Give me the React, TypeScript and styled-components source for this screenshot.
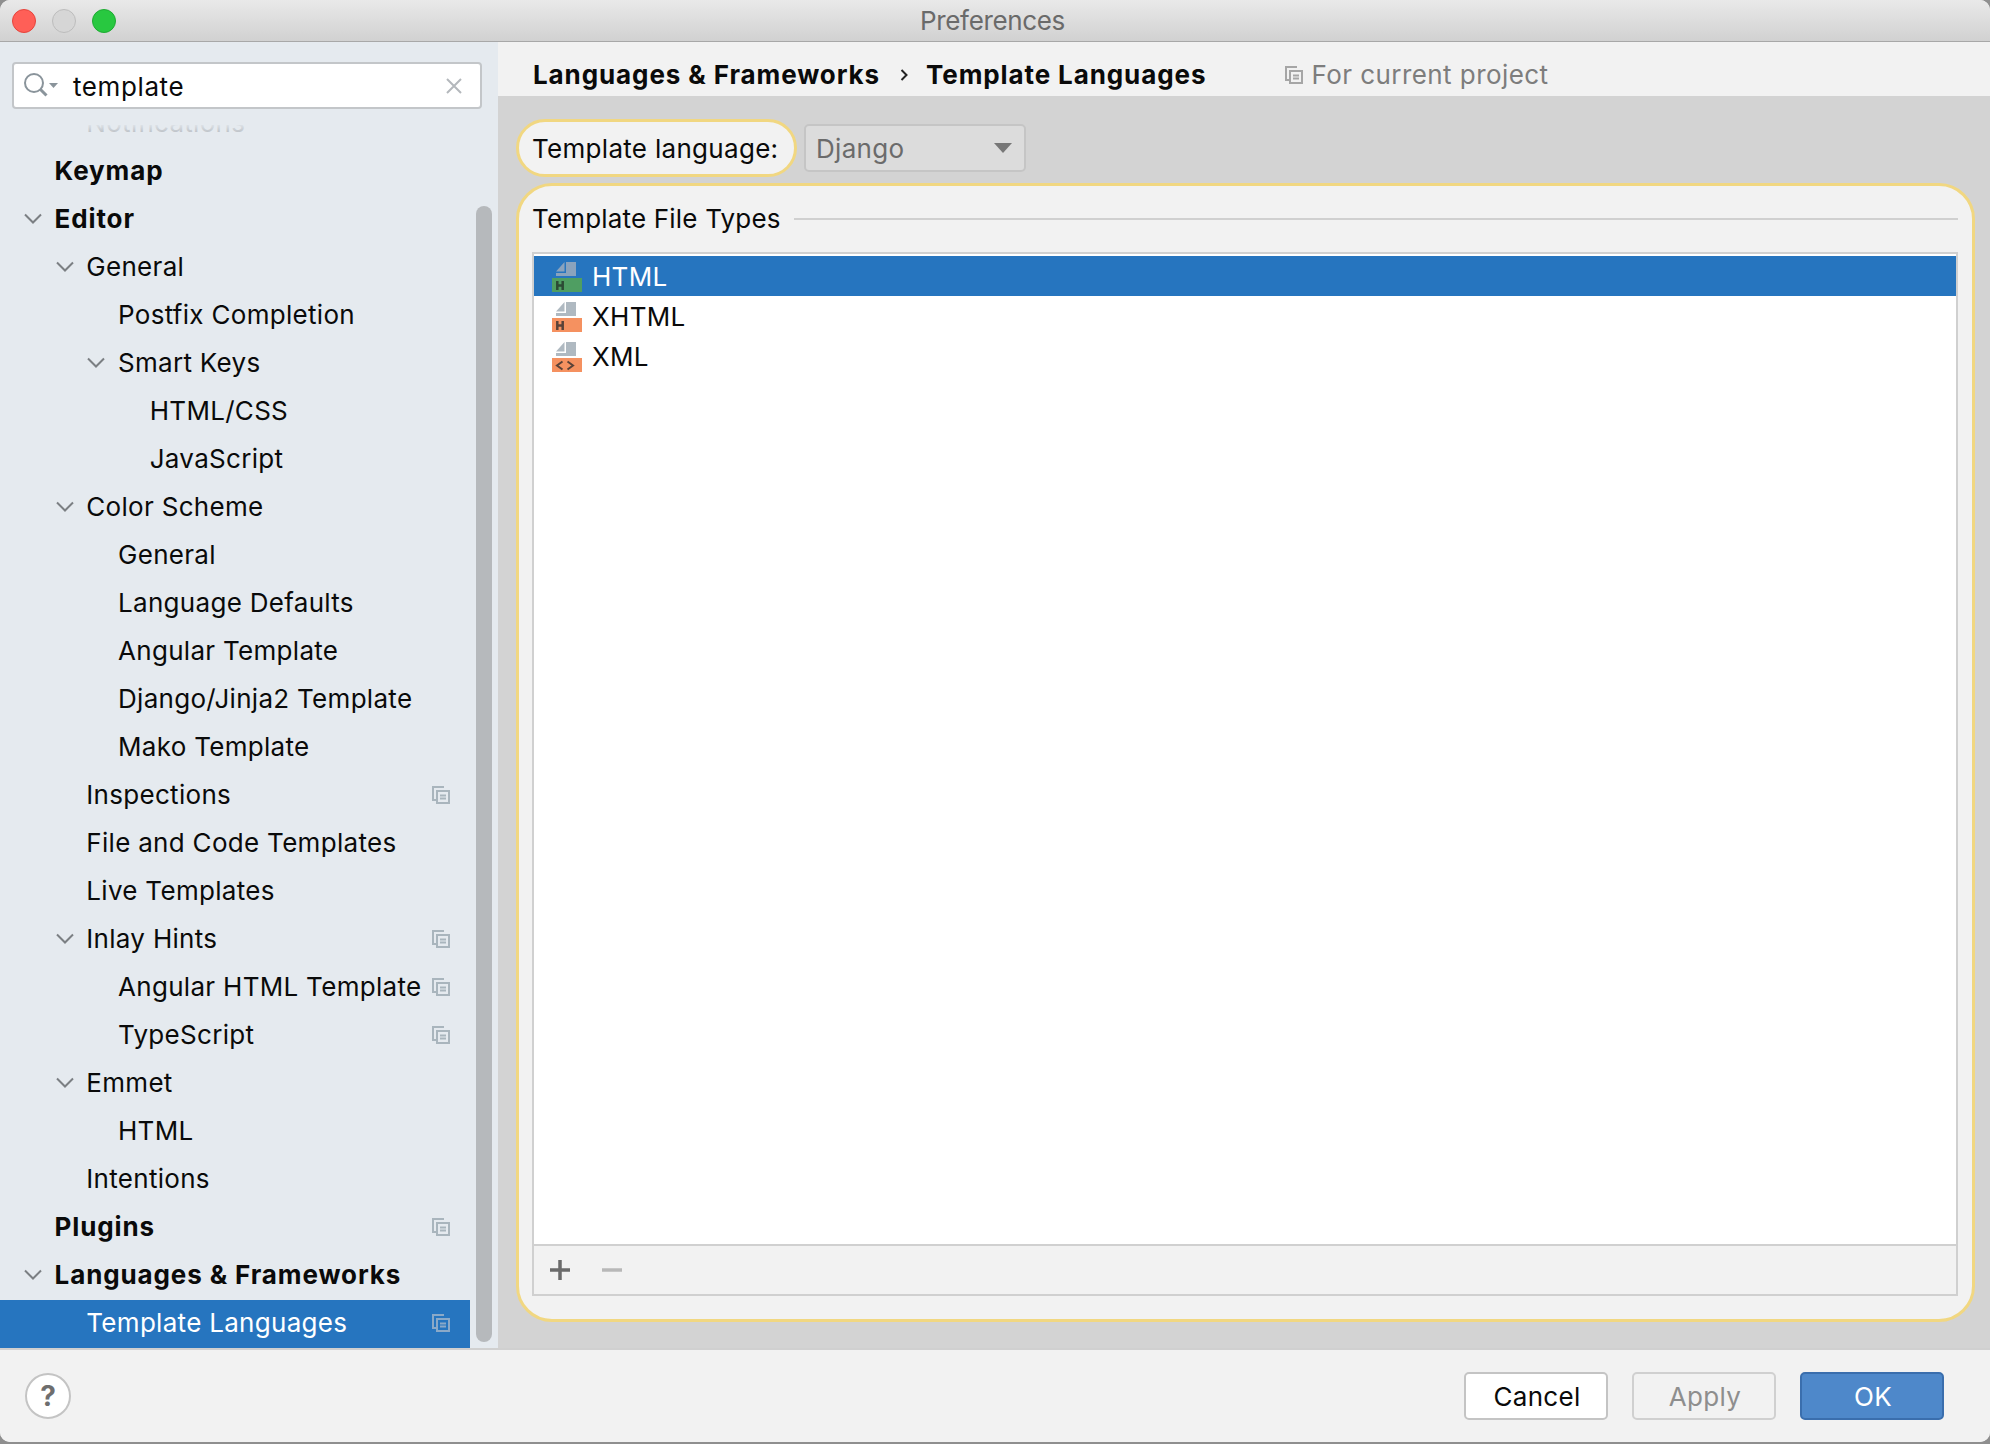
import React from "react";
import styled, { createGlobalStyle } from "styled-components";

const Global = createGlobalStyle`
  html, body { margin: 0; padding: 0; background: #8f8f8f; }
  body { font-family: Inter, "Liberation Sans", sans-serif; -webkit-font-smoothing: antialiased; }
  #root { width: 1990px; height: 1444px; overflow: hidden; }
`;

const Win = styled.div`
  width: 1990px; height: 1442px; display: flex; flex-direction: column;
  background: #f2f2f2; border-radius: 10px; overflow: hidden; font-size: 26px; color: #0a0a0a;
`;
const TitleBar = styled.div`
  height: 41px; flex: none; display: flex; align-items: center; padding-left: 12px; gap: 16px; position: relative;
  background: linear-gradient(#e9e9e9, #d1d1d1); border-bottom: 1px solid #a8a8a8; box-sizing: content-box;
`;
const Light = styled.span<{ $c: string; $b: string }>`
  width: 24px; height: 24px; border-radius: 50%; background: ${p => p.$c}; border: 1px solid ${p => p.$b}; box-sizing: border-box; flex: none;
`;
const Title = styled.div`
  position: absolute; left: 0; right: 5px; top: 0; height: 41px; line-height: 42px; text-align: center; font-size: 26px; color: #6a6a6a; letter-spacing: -0.35px;
`;
const Body = styled.div`display: flex; flex: 1; min-height: 0;`;
const Sidebar = styled.div`
  width: 498px; flex: none; background: #e5eaef; display: flex; flex-direction: column; position: relative;
`;
const SearchBox = styled.div`
  margin: 20px 0 0 12px; width: 470px; height: 47px; box-sizing: border-box; flex: none;
  background: #fff; border: 2px solid #c3c6c9; border-radius: 4px; display: flex; align-items: center; position: relative;
`;
const SearchIcon = styled.svg`margin-left: 9px; flex: none;`;
const SearchText = styled.span`margin-left: 14px; flex: 1; letter-spacing: 0.6px; padding-top: 2px;`;
const ClearIcon = styled.svg`margin-right: 18px; flex: none;`;
const Tree = styled.div`
  margin-top: 16px; flex: 1; min-height: 0; overflow: hidden; position: relative; width: 470px;
`;
const Fade = styled.div`
  position: absolute; left: 0; top: 0; right: 0; height: 10px; background: linear-gradient(rgba(229,234,239,.9), rgba(229,234,239,.45));
`;
const Row = styled.div<{ $level: number; $bold?: boolean; $sel?: boolean; $first?: boolean }>`
  height: 48px; display: flex; align-items: center; position: relative; box-sizing: border-box;
  padding-left: ${p => 54.6 + p.$level * 31.7}px; padding-bottom: 3px;
  font-weight: ${p => (p.$bold ? 700 : 400)};
  background: ${p => (p.$sel ? "#2675bf" : "transparent")};
  color: ${p => (p.$sel ? "#fff" : p.$first ? "#8b8f94" : "#0a0a0a")};
  margin-top: ${p => (p.$first ? "-25px" : "0")};
  letter-spacing: ${p => (p.$bold ? "0.88px" : "0.3px")}; white-space: nowrap;
`;
const RowChevron = styled.svg<{ $level: number }>`
  position: absolute; left: ${p => 24 + p.$level * 31.7}px; top: 16px;
`;
const RowCopy = styled.span`position: absolute; left: 432px; top: 14px; display: flex;`;
const ScrollThumb = styled.div`
  position: absolute; left: 476px; top: 164px; bottom: 6px; width: 16px; border-radius: 8px; background: #b6b9bc;
`;
const Main = styled.div`flex: 1; min-width: 0; display: flex; flex-direction: column; background: #d3d3d3;`;
const Crumbs = styled.div`
  height: 54px; box-sizing: border-box; flex: none; background: #f2f2f2; display: flex; align-items: center; padding: 11px 0 0 35px; font-weight: 700; letter-spacing: 0.9px;
`;
const CrumbSep = styled.svg`margin: 0 18px 0 20px; flex: none;`;
const ProjectHint = styled.span`
  margin-left: 79px; display: flex; align-items: center; gap: 8px; color: #7d7d7d; font-weight: 400; letter-spacing: 0.44px;
`;
const Content = styled.div`
  flex: 1; min-height: 0; padding: 23px 15px 26px 18px; display: flex; flex-direction: column; gap: 6px;
`;
const TopLine = styled.div`display: flex; align-items: center; gap: 7px;`;
const LangPill = styled.div`
  width: 281px; height: 58px; box-sizing: border-box; border: 3px solid #f1d781; border-radius: 29px;
  background: #f2f2f2; display: flex; align-items: center; padding-left: 13px; letter-spacing: 0.3px; white-space: nowrap;
`;
const Combo = styled.div`
  width: 222px; height: 48px; box-sizing: border-box; border: 2px solid #c5c5c5; border-radius: 5px; background: #dcdcdc;
  display: flex; align-items: center; justify-content: space-between; padding: 0 12px 0 10px; color: #6b6b6b; letter-spacing: 0.3px;
`;
const Group = styled.div`
  flex: 1; min-height: 0; box-sizing: border-box; border: 3px solid #f1d781; border-radius: 36px; background: #f2f2f2;
  padding: 0 14px 23px 13px; display: flex; flex-direction: column;
`;
const GroupHead = styled.div`height: 66px; flex: none; display: flex; align-items: center; gap: 13px; letter-spacing: 0.18px; padding-bottom: 1px; box-sizing: border-box;`;
const GroupLine = styled.div`flex: 1; height: 2px; background: #d0d0d0;`;
const ListBox = styled.div`flex: 1; min-height: 0; border: 2px solid #d0d0d0; display: flex; flex-direction: column;`;
const ListRows = styled.div`flex: 1; background: #fff; padding-top: 2px;`;
const FileRow = styled.div<{ $sel?: boolean }>`
  height: 40px; display: flex; align-items: center; padding-left: 18px; gap: 10px; letter-spacing: 0.3px;
  background: ${p => (p.$sel ? "#2675bf" : "transparent")}; color: ${p => (p.$sel ? "#fff" : "#0a0a0a")};
`;
const FileGlyph = styled.svg`margin-top: 2px; flex: none;`;
const ListTools = styled.div`
  height: 48px; flex: none; border-top: 2px solid #d0d0d0; background: #f2f2f2; display: flex; align-items: center; padding-left: 16px; gap: 32px;
`;
const Footer = styled.div`
  height: 94px; flex: none; box-sizing: border-box; border-top: 2px solid #d0d0d0; background: #f2f2f2;
  display: flex; align-items: center; padding: 0 46px 0 25px; gap: 24px;
`;
const Help = styled.div`
  width: 46px; height: 46px; border-radius: 50%; box-sizing: border-box; border: 2px solid #c4c4c4; background: #fff; color: #6e6e6e;
  display: flex; align-items: center; justify-content: center; font-weight: 700; font-size: 28px; margin-right: auto;
`;
const Btn = styled.div<{ $kind: "plain" | "off" | "ok" }>`
  width: 144px; height: 48px; box-sizing: border-box; border-radius: 5px; display: flex; align-items: center; justify-content: center; letter-spacing: 0.3px; padding-left: 2px;
  border: 2px solid ${p => (p.$kind === "ok" ? "#3a6ead" : p.$kind === "off" ? "#d0d0d0" : "#c4c4c4")};
  background: ${p => (p.$kind === "ok" ? "#4e88ca" : p.$kind === "off" ? "#f2f2f2" : "#fff")};
  color: ${p => (p.$kind === "ok" ? "#fff" : p.$kind === "off" ? "#8e8e8e" : "#0a0a0a")};
`;

const CopyIcon = ({ c = "#a9b5bd" }: { c?: string }) => (
  <svg width="18" height="18" viewBox="0 0 18 18" fill="none" stroke={c} strokeWidth="2">
    <path d="M12 1H1v13h3" />
    <rect x="5" y="5" width="12" height="12" />
    <path d="M8 9.5h6M8 12.5h6" />
  </svg>
);
const Chevron = ({ level }: { level: number }) => (
  <RowChevron $level={level} width="18" height="14" viewBox="0 0 18 14" fill="none" stroke="#7b7f83" strokeWidth="2">
    <path d="M1 2.500l8 8 8-8" />
  </RowChevron>
);

const tree: { t: string; l: number; b?: boolean; open?: boolean; copy?: boolean; sel?: boolean; first?: boolean }[] = [
  { t: "Notifications", l: 1, first: true },
  { t: "Keymap", l: 0, b: true },
  { t: "Editor", l: 0, b: true, open: true },
  { t: "General", l: 1, open: true },
  { t: "Postfix Completion", l: 2 },
  { t: "Smart Keys", l: 2, open: true },
  { t: "HTML/CSS", l: 3 },
  { t: "JavaScript", l: 3 },
  { t: "Color Scheme", l: 1, open: true },
  { t: "General", l: 2 },
  { t: "Language Defaults", l: 2 },
  { t: "Angular Template", l: 2 },
  { t: "Django/Jinja2 Template", l: 2 },
  { t: "Mako Template", l: 2 },
  { t: "Inspections", l: 1, copy: true },
  { t: "File and Code Templates", l: 1 },
  { t: "Live Templates", l: 1 },
  { t: "Inlay Hints", l: 1, open: true, copy: true },
  { t: "Angular HTML Template", l: 2, copy: true },
  { t: "TypeScript", l: 2, copy: true },
  { t: "Emmet", l: 1, open: true },
  { t: "HTML", l: 2 },
  { t: "Intentions", l: 1 },
  { t: "Plugins", l: 0, b: true, copy: true },
  { t: "Languages & Frameworks", l: 0, b: true, open: true },
  { t: "Template Languages", l: 1, copy: true, sel: true },
];

const FileIcon = ({ band, mark, doc, kind }: { band: string; mark: string; doc: string; kind: "h" | "x" }) => (
  <FileGlyph width="30" height="30" viewBox="0 0 30 30">
    <path d="M4 9.500L12.500 0v9.500zM14 0h10v14H4v-3h10z" fill={doc} />
    <rect x="0" y="16" width="30" height="14" fill={band} />
    {kind === "h" ? (
      <path d="M5.300 19v9M10.700 19v9M5 23.500h6" stroke={mark} strokeWidth="2.500" fill="none" />
    ) : (
      <path d="M10.500 19.500l-5.500 4 5.500 4M15.500 19.500l5.500 4-5.500 4" stroke={mark} strokeWidth="2" fill="none" />
    )}
  </FileGlyph>
);

export default function App() {
  return (
    <>
      <Global />
      <Win>
        <TitleBar>
          <Light $c="#ff5f57" $b="#e5443c" />
          <Light $c="#d6d6d6" $b="#bcbcbc" />
          <Light $c="#28c840" $b="#1eaa32" />
          <Title>Preferences</Title>
        </TitleBar>
        <Body>
          <Sidebar>
            <SearchBox>
              <SearchIcon width="36" height="30" viewBox="0 0 36 30" fill="none">
                <circle cx="11" cy="12" r="9" stroke="#8a949b" strokeWidth="2" />
                <path d="M17.500 18.500l6 6" stroke="#8a949b" strokeWidth="3" />
                <path d="M26 12h9l-4.500 5z" fill="#8a949b" />
              </SearchIcon>
              <SearchText>template</SearchText>
              <ClearIcon width="16" height="16" viewBox="0 0 16 16" fill="none" stroke="#b4b8bc" strokeWidth="2">
                <path d="M1 1l14 14M15 1L1 15" />
              </ClearIcon>
            </SearchBox>
            <Tree>
              {tree.map((r, i) => (
                <Row key={i} $level={r.l} $bold={r.b} $sel={r.sel} $first={r.first}>
                  {r.open && <Chevron level={r.l} />}
                  {r.t}
                  {r.copy && (
                    <RowCopy>
                      <CopyIcon c={r.sel ? "#8aa9c8" : "#a9b5bd"} />
                    </RowCopy>
                  )}
                </Row>
              ))}
              <Fade />
            </Tree>
            <ScrollThumb />
          </Sidebar>
          <Main>
            <Crumbs>
              Languages &amp; Frameworks
              <CrumbSep width="8" height="14" viewBox="0 0 8 14" fill="none" stroke="#222" strokeWidth="2">
                <path d="M1.500 2l5 5-5 5" />
              </CrumbSep>
              Template Languages
              <ProjectHint>
                <CopyIcon c="#a6a6a6" />
                For current project
              </ProjectHint>
            </Crumbs>
            <Content>
              <TopLine>
                <LangPill>Template language:</LangPill>
                <Combo>
                  Django
                  <svg width="18" height="10" viewBox="0 0 18 10">
                    <path d="M0 0h18l-9 10z" fill="#777" />
                  </svg>
                </Combo>
              </TopLine>
              <Group>
                <GroupHead>
                  Template File Types
                  <GroupLine />
                </GroupHead>
                <ListBox>
                  <ListRows>
                    <FileRow $sel>
                      <FileIcon band="#4f9e62" mark="#2c4a35" doc="#8aa3bd" kind="h" />
                      HTML
                    </FileRow>
                    <FileRow>
                      <FileIcon band="#f59160" mark="#5a4238" doc="#afb9c1" kind="h" />
                      XHTML
                    </FileRow>
                    <FileRow>
                      <FileIcon band="#f59160" mark="#5a4238" doc="#afb9c1" kind="x" />
                      XML
                    </FileRow>
                  </ListRows>
                  <ListTools>
                    <svg width="20" height="20" viewBox="0 0 20 20" stroke="#6b6b6b" strokeWidth="3.500">
                      <path d="M10 0v20M0 10h20" />
                    </svg>
                    <svg width="20" height="20" viewBox="0 0 20 20" stroke="#b8b8b8" strokeWidth="3.500">
                      <path d="M0 10h20" />
                    </svg>
                  </ListTools>
                </ListBox>
              </Group>
            </Content>
          </Main>
        </Body>
        <Footer>
          <Help>?</Help>
          <Btn $kind="plain">Cancel</Btn>
          <Btn $kind="off">Apply</Btn>
          <Btn $kind="ok">OK</Btn>
        </Footer>
      </Win>
    </>
  );
}
